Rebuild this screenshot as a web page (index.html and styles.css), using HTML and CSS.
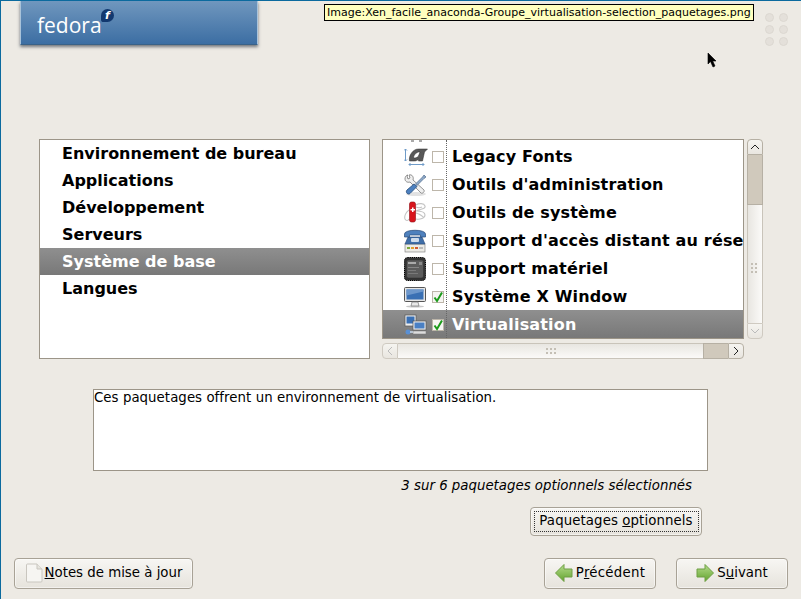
FILE: index.html
```html
<!DOCTYPE html>
<html lang="fr">
<head>
<meta charset="utf-8">
<title>Anaconda</title>
<link rel="stylesheet" href="styles.css">
</head>
<body>
<div class="screen">
  <header class="top">
    <div class="logo">
      <span class="wordmark">fedora</span>
      <span class="bubble">f</span>
    </div>
  </header>
  <div class="tooltip">Image:Xen_facile_anaconda-Groupe_virtualisation-selection_paquetages.png</div>
  <div class="dots"><i></i><i></i><i></i><i></i><i></i><i></i></div>
  <svg class="cursor" width="12" height="18" viewBox="0 0 12 18"><path d="M1 1v11l2.500-2.500L6 15l2-1-2.300-5H9z" fill="#000" stroke="#000" stroke-width=".6"/></svg>

  <main class="chooser">
    <ul class="groups">
      <li>Environnement de bureau</li>
      <li>Applications</li>
      <li>Développement</li>
      <li>Serveurs</li>
      <li class="selected">Système de base</li>
      <li>Langues</li>
    </ul>
    <div class="packages">
      <div class="pkg-main">
        <div class="pkg-list">
          <div class="sliver"><svg width="24" height="3"><rect x="6" y="0" width="3" height="2" fill="#aaa"/><rect x="14" y="0" width="3" height="2" fill="#aaa"/></svg></div>
          <div class="pkg">
            <svg class="ico" width="24" height="24" viewBox="0 0 24 24"><path d="M1.500 4v12M0 5.500 1.500 4 3 5.500M0 14.500 1.500 16 3 14.500M5 19.500h15M6.500 18 5 19.500 6.500 21M18.500 18l1.500 1.500-1.500 1.500" stroke="#6f9bc8" fill="none"/><path d="M5.500 16c-1-5 3-12 9-12h9l-3 3-2 9h-4l.3-2c-1.500 1.500-3 2-4.500 2zM9.500 12.500c1 1 3.500.5 5-1.500l1.500-4c-3-.5-6 2.500-6.500 5.500z" fill="#585858" stroke="#2a2a2a" stroke-width=".5" fill-rule="evenodd"/></svg>
            <span class="box"></span><span class="name">Legacy Fonts</span>
          </div>
          <div class="pkg">
            <svg class="ico" width="24" height="24" viewBox="0 0 24 24"><ellipse cx="12" cy="21" rx="10" ry="2" fill="#e2e2e2"/><path d="M4 2C2 2 1 4 1 6c0 2 2 4 5 3l11 11c1 1 4-1 3-3L9 7c1-3-1-6-4-5l1 3-2 1-1-3z" fill="#efefef" stroke="#7a7a7a" stroke-width=".8"/><path d="M20 2l2 2-2 1.500-7 7-1.500-1.500 7-7z" fill="#8fa9c8" stroke="#3c5a80" stroke-width=".6"/><path d="M10 11 3 17c-2 2 1 5.500 3 3.500l7-7z" fill="#4c80bf" stroke="#234a7a" stroke-width=".8"/></svg>
            <span class="box"></span><span class="name">Outils d'administration</span>
          </div>
          <div class="pkg">
            <svg class="ico" width="24" height="24" viewBox="0 0 24 24"><path d="M12 4c3-2 8-2 9 1s-5 3-9 5c5 0 9 1 9 4s-5 5-9 4M5 9C2 11 0 15 1 18c1 2 3 2 4 0M12 12c3 1 6 2 8 5M12 6c2 1 4 1 6 0" fill="none" stroke="#c4c4c4" stroke-width="1.100"/><rect x="5.500" y="1" width="6" height="20" rx="2" fill="#d8141c" stroke="#8e0a10" stroke-width=".6"/><path d="M8 6.500h1.500V8H11v1.500H9.500V11H8V9.500H6.500V8H8z" fill="#fff"/></svg>
            <span class="box"></span><span class="name">Outils de système</span>
          </div>
          <div class="pkg">
            <svg class="ico" width="24" height="24" viewBox="0 0 24 24"><rect x="1" y="15" width="20" height="8" fill="#ecebe6" stroke="#777" stroke-width=".6"/><path d="M3 18h3v2H3z" fill="#7faa3c"/><path d="M7 18h3v2H7z" fill="#e0a030"/><path d="M11 18h3v2h-3z" fill="#d05a30"/><path d="M15 18h4v2h-4z" fill="#bbb"/><path d="M4 8h14l3 7H1z" fill="#3f6ea8" stroke="#2a4a78" stroke-width=".6"/><path d="M0.500 5c0-5 21-5 21 0v3h-5V6h-11v2h-5z" fill="#4f81bd" stroke="#2a4a78" stroke-width=".7"/><rect x="7" y="9" width="8" height="4" rx="1" fill="#cfdcec"/></svg>
            <span class="box"></span><span class="name">Support d'accès distant au réseau</span>
          </div>
          <div class="pkg">
            <svg class="ico" width="24" height="24" viewBox="0 0 24 24"><rect x="0.500" y="0.500" width="21" height="23" rx="3" fill="#333" stroke="#000" stroke-dasharray="1.300 .8"/><rect x="2.500" y="3" width="17" height="18" rx="2" fill="#5c5c5c" stroke="#2e2e2e" stroke-width=".5"/><rect x="4" y="5" width="8" height="2" fill="#aaa"/><rect x="15" y="5" width="3" height="3" fill="#8a8a8a"/><rect x="4" y="10" width="11" height="1" fill="#858585"/><rect x="4" y="13" width="8" height="1" fill="#7a7a7a"/><rect x="4" y="16" width="10" height="1" fill="#7a7a7a"/></svg>
            <span class="box"></span><span class="name">Support matériel</span>
          </div>
          <div class="pkg">
            <svg class="ico" width="24" height="24" viewBox="0 0 24 24"><ellipse cx="11" cy="21.500" rx="9" ry="1" fill="#c8c8c8"/><rect x="0.500" y="2.500" width="21" height="14" rx="1" fill="#e6e6e6" stroke="#555"/><rect x="2.500" y="4.500" width="17" height="10" fill="#3a70b4"/><path d="M2.500 4.500h17v2l-17 4z" fill="#6d97cb"/><path d="M8 17h6l1 4H7z" fill="#e8e8e8" stroke="#777" stroke-width=".7"/></svg>
            <span class="box on"><svg width="12" height="12" viewBox="0 0 12 12"><path d="M2.500 6.500 5 10 10 1.500" stroke="#1a9a1a" stroke-width="2" fill="none"/></svg></span><span class="name">Système X Window</span>
          </div>
          <div class="pkg selected">
            <svg class="ico" width="24" height="24" viewBox="0 0 24 24"><rect x="1" y="2" width="11" height="11" fill="#eee" stroke="#555" stroke-width=".7"/><rect x="2.500" y="3.500" width="8" height="7" fill="#3a70b4"/><rect x="9" y="8" width="13" height="9" fill="#eee" stroke="#555" stroke-width=".7"/><rect x="10.500" y="9.500" width="10" height="6" fill="#4a80c4"/><rect x="9" y="18" width="13" height="3" fill="#ddd" stroke="#777" stroke-width=".5"/><circle cx="4" cy="19" r="2.500" fill="#5a90d4"/><path d="M6 19h3" stroke="#cde" stroke-width="1.500"/></svg>
            <span class="box on"><svg width="12" height="12" viewBox="0 0 12 12"><path d="M2.500 6.500 5 10 10 1.500" stroke="#1a9a1a" stroke-width="2" fill="none"/></svg></span><span class="name">Virtualisation</span>
          </div>
        </div>
        <div class="vbar">
          <div class="sb-btn up"><svg width="10" height="6"><path d="M1 5l4-4 4 4" stroke="#222" fill="none"/></svg></div>
          <div class="v-thumb"></div>
          <div class="v-track"><span class="grip"></span></div>
          <div class="sb-btn down"><svg width="10" height="6"><path d="M1 1l4 4 4-4" stroke="#bbb" fill="none"/></svg></div>
        </div>
      </div>
      <div class="hbar">
        <div class="sb-btn left"><svg width="6" height="10"><path d="M5 1 1 5l4 4" stroke="#bbb" fill="none"/></svg></div>
        <div class="h-track"><span class="grip"></span></div>
        <div class="h-thumb"></div>
        <div class="sb-btn right"><svg width="6" height="10"><path d="M1 1l4 4-4 4" stroke="#222" fill="none"/></svg></div>
      </div>
    </div>
  </main>

  <section class="details">
    <div class="desc">Ces paquetages offrent un environnement de virtualisation.</div>
    <p class="count">3 sur 6 paquetages optionnels sélectionnés</p>
    <div class="opt-row"><button class="btn opt"><span class="focus">Paquetages <u>o</u>ptionnels</span></button></div>
  </section>

  <footer class="actions">
    <button class="btn notes">
      <svg width="18" height="20" viewBox="0 0 18 20"><path d="M2.500 1H12l5 5v12a1 1 0 0 1-1 1H2.500a1 1 0 0 1-1-1V2a1 1 0 0 1 1-1z" fill="#f6f5f2" stroke="#c9c6bf"/><path d="M12 1v5h5" fill="#e6e4de" stroke="#c9c6bf"/></svg>
      <span><u>N</u>otes de mise à jour</span>
    </button>
    <span class="spacer"></span>
    <button class="btn nav">
      <svg width="18" height="18" viewBox="0 0 18 18"><defs><linearGradient id="ga" x1="0" y1="0" x2="0" y2="1"><stop offset="0" stop-color="#b5dc8c"/><stop offset="1" stop-color="#62a32e"/></linearGradient></defs><path d="M.5 9 9 .5V5h8v8H9v4.500z" fill="url(#ga)" stroke="#6f9f45" stroke-linejoin="round"/></svg>
      <span class="wide">P<u>r</u>écédent</span>
    </button>
    <button class="btn nav next">
      <svg width="18" height="18" viewBox="0 0 18 18"><defs><linearGradient id="gb" x1="0" y1="0" x2="0" y2="1"><stop offset="0" stop-color="#b5dc8c"/><stop offset="1" stop-color="#62a32e"/></linearGradient></defs><path d="M17.500 9 9 .5V5H1v8h8v4.500z" fill="url(#gb)" stroke="#6f9f45" stroke-linejoin="round"/></svg>
      <span>S<u>u</u>ivant</span>
    </button>
  </footer>
</div>
</body>
</html>
```
FILE: styles.css
```css
* { box-sizing: border-box; }
html, body { margin: 0; padding: 0; }
body { width: 801px; height: 599px; overflow: hidden; background: #edeae4; font-family: "DejaVu Sans", sans-serif; color: #000; }
.screen { position: relative; width: 801px; height: 599px; border-top: 1px solid #0b6a9e; border-left: 1px solid #0b6a9e; background: #edeae4; display: flex; flex-direction: column; overflow: hidden; }

.top { height: 138px; flex: none; padding-left: 19px; }
.logo { position: relative; width: 238px; height: 44px; background: linear-gradient(#7097be, #3c6ea3); border: 1px solid #4d7aa6; border-top: 0; border-left-color: #a9c3da; border-right-color: #a9c3da; border-bottom-color: #3a6288; box-shadow: 0 2px 3px rgba(60,70,80,.7); }
.wordmark { position: absolute; left: 16px; top: 11px; font: 400 21px/26px "Open Sans", sans-serif; color: #fff; }
.bubble { position: absolute; left: 80px; top: 8px; width: 13px; height: 13px; border-radius: 50% 50% 50% 20%; background: #12386f; color: #fff; font: italic 700 11px/13px "DejaVu Sans", sans-serif; text-align: center; }

.tooltip { position: absolute; left: 323px; top: 3px; height: 17px; width: 430px; background: #ffffbf; border: 1px solid #000; font-size: 11px; line-height: 15px; padding-left: 2px; white-space: nowrap; overflow: hidden; }
.dots { position: absolute; left: 764px; top: 12px; display: grid; grid-template-columns: repeat(2, 9px); column-gap: 5px; row-gap: 3px; }
.dots i { width: 9px; height: 9px; border-radius: 50%; background: #e4e0da; border: 1px solid #dcd8d1; }
.cursor { position: absolute; left: 706px; top: 51px; }

.chooser { flex: none; height: 220px; padding-left: 38px; display: flex; gap: 12px; }
.groups { list-style: none; margin: 0; padding: 0; width: 331px; height: 220px; background: #fff; border: 1px solid #9c9588; }
.groups li { height: 27px; line-height: 25px; padding: 1px 0 0 22px; font-size: 16px; font-weight: 700; }
.groups li.selected { background: linear-gradient(#8f8f8f, #787878); color: #fff; }

.packages { width: 381px; display: flex; flex-direction: column; gap: 4px; }
.pkg-main { display: flex; gap: 3px; height: 200px; }
.pkg-list { position: relative; width: 362px; height: 200px; background: #fff; border: 1px solid #9c9588; overflow: hidden; }
.pkg-list::after { content: ""; position: absolute; left: 63px; top: 0; bottom: 0; border-left: 1px dotted #666; }
.sliver { height: 2px; padding-left: 22px; overflow: hidden; display: block; }
.sliver svg { display: block; }
.pkg { height: 28px; display: flex; align-items: center; padding: 2px 0 0 21px; white-space: nowrap; }
.ico { flex: none; margin-right: 4px; }
.box { flex: none; width: 12px; height: 12px; border: 1px solid #bdb6aa; background: #fff; margin-right: 8px; display: block; }
.box svg { display: block; margin: -1px; }
.box.on { background: #f6f5f2; }
.name { font-size: 16px; font-weight: 700; letter-spacing: .17px; margin-bottom: 2px; }
.pkg.selected { background: linear-gradient(#8f8f8f, #787878); color: #fff; }

.vbar { width: 16px; height: 200px; display: flex; flex-direction: column; }
.sb-btn { flex: none; display: flex; align-items: center; justify-content: center; background: linear-gradient(#f5f4f0, #e9e6e0); border: 1px solid #b6b0a4; }
.sb-btn.up { height: 16px; border-radius: 4px 4px 0 0; }
.sb-btn.down { height: 16px; border-radius: 0 0 4px 4px; border-color: #cfcac1; }
.v-thumb { flex: none; height: 50px; background: #d0c9bc; border: 1px solid #b6b0a4; border-width: 0 1px 1px; }
.v-track { flex: 1; background: linear-gradient(90deg, #e8e6e1, #fbfaf8); border: 1px solid #c9c4ba; border-width: 0 1px; display: flex; align-items: center; justify-content: center; }
.grip { display: block; width: 8px; height: 10px; background: radial-gradient(circle at 1px 1px, #c4bfb5 1px, transparent 1.200px) 0 0 / 4px 4px; }
.v-track .grip { margin-top: 8px; }
.h-track .grip { width: 10px; height: 6px; }

.hbar { display: flex; height: 16px; width: 362px; }
.sb-btn.left { width: 16px; border-radius: 4px 0 0 4px; border-color: #cfcac1; }
.sb-btn.right { width: 16px; border-radius: 0 4px 4px 0; }
.h-track { flex: 1; background: linear-gradient(#e8e6e1, #fbfaf8); border: 1px solid #c9c4ba; border-width: 1px 0; display: flex; align-items: center; justify-content: center; }
.h-thumb { flex: none; width: 25px; background: #d0c9bc; border: 1px solid #b6b0a4; border-width: 1px 0 1px 1px; }

.details { flex: none; padding-top: 30px; }
.desc { margin-left: 92px; width: 615px; height: 82px; background: #fff; border: 1px solid #9c9588; font-size: 13.330px; line-height: 16px; letter-spacing: .05px; }
.count { margin: 6px 0 0; width: 691px; height: 18px; text-align: right; font-size: 13.330px; line-height: 18px; font-style: italic; }
.opt-row { margin: 12px 0 0; padding-left: 529px; }

.btn { display: inline-flex; align-items: center; justify-content: center; margin: 0; font: 13.330px/16px "DejaVu Sans", sans-serif; color: #000; background: linear-gradient(#f7f6f3, #e6e3dc); border: 1px solid #a8a296; border-radius: 4px; padding: 0; box-shadow: inset 0 0 0 1px rgba(255,255,255,.5); }
.opt { width: 172px; height: 29px; }
.focus { width: 165px; height: 21px; line-height: 17px; border: 1px dotted #333; text-align: center; letter-spacing: .09px; }
.wide { letter-spacing: .25px; }

.actions { flex: none; height: 30px; margin-top: 22px; padding: 0 13px; display: flex; gap: 20px; }
.spacer { flex: 1; }
.actions .btn { height: 31px; gap: 2px; padding-bottom: 2px; }
.actions .nav { gap: 3px; }
.notes { width: 179px; }
.nav { width: 112px; }
```
